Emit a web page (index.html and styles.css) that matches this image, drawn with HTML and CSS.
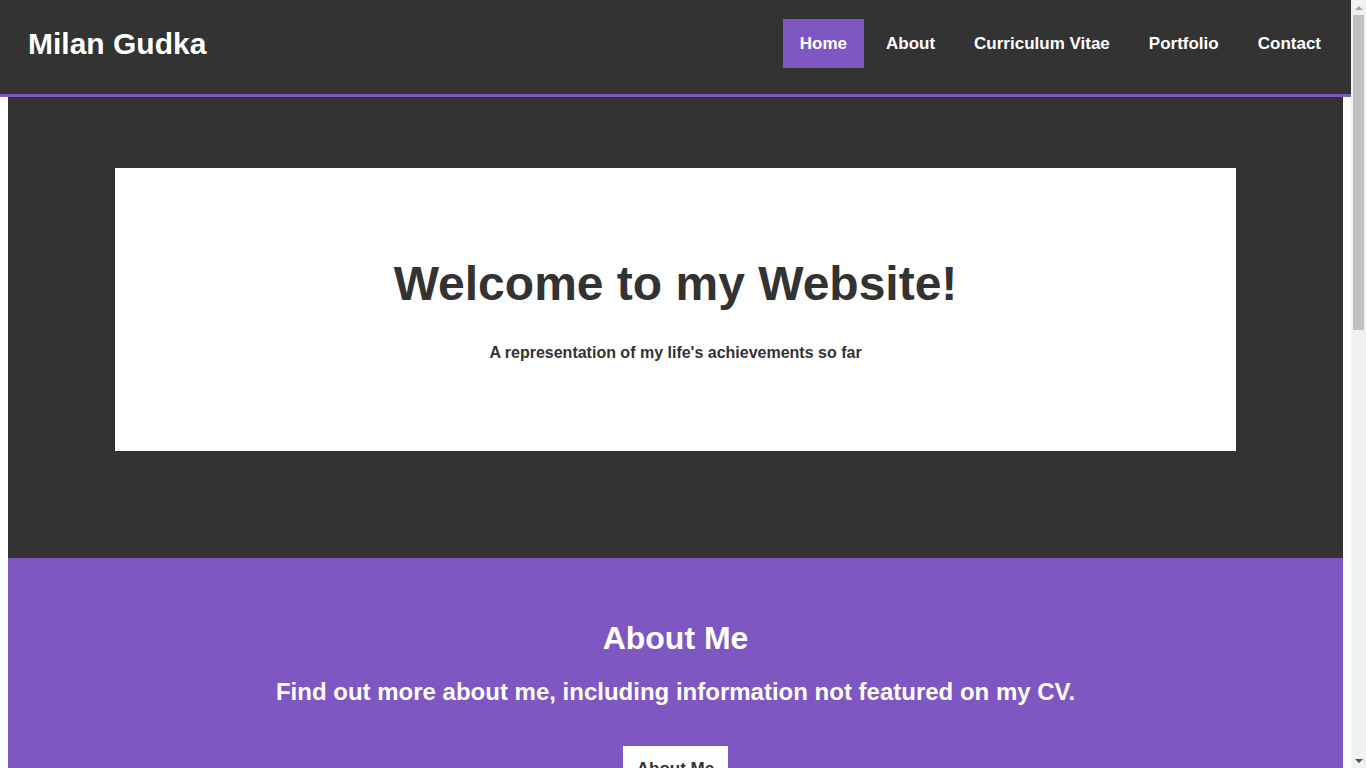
FILE: index.html
```html
<!DOCTYPE html>
<html lang="en">
<head>
<meta charset="utf-8">
<title>Milan Gudka</title>
<link rel="stylesheet" href="styles.css">
</head>
<body>
<header class="site-header">
  <div class="logo">Milan Gudka</div>
  <nav class="nav">
    <ul class="nav-list">
      <li><a class="nav-link active" href="#">Home</a></li>
      <li><a class="nav-link" href="#">About</a></li>
      <li><a class="nav-link" href="#">Curriculum Vitae</a></li>
      <li><a class="nav-link" href="#">Portfolio</a></li>
      <li><a class="nav-link" href="#">Contact</a></li>
    </ul>
  </nav>
</header>

<div class="scrollbar" aria-hidden="true">
  <div class="scroll-arrow up"></div>
  <div class="scroll-track"><div class="scroll-thumb"></div></div>
  <div class="scroll-arrow down"></div>
</div>

<section class="hero">
  <div class="hero-card">
    <h1 class="hero-title">Welcome to my Website!</h1>
    <p class="hero-sub">A representation of my life's achievements so far</p>
  </div>
</section>

<section class="about">
  <h2 class="section-title">About Me</h2>
  <h3 class="section-sub">Find out more about me, including information not featured on my CV.</h3>
  <a class="btn" href="#">About Me</a>
</section>

<section class="portfolio">
  <h2 class="section-title">Portfolio</h2>
  <h3 class="section-sub">Take a look at some of the projects I have worked on.</h3>
  <a class="btn" href="#">Portfolio</a>
</section>

<section class="contact">
  <h2 class="section-title">Contact Me</h2>
  <h3 class="section-sub">Get in touch with me for any enquiries.</h3>
  <a class="btn" href="#">Contact</a>
</section>

<footer class="footer">
  <p>&copy; Milan Gudka</p>
</footer>
</body>
</html>
```

FILE: styles.css
```css
html {
  scrollbar-width: none;
}

body {
  margin: 8px 23px 8px 8px;
  font-family: "Liberation Sans", Arial, sans-serif;
  background: #ffffff;
  color: #333333;
}

.site-header {
  position: fixed;
  top: 0;
  left: 0;
  right: 15px;
  height: 87px;
  padding: 0 13px 7px 28px;
  background: #333333;
  border-bottom: 3px solid #7e57c2;
  display: flex;
  align-items: center;
  justify-content: space-between;
  z-index: 10;
}

.logo {
  color: #ffffff;
  font-size: 30px;
  font-weight: bold;
}

.nav-list {
  list-style: none;
  margin: 0;
  padding: 0;
  display: flex;
  gap: 5px;
}

.nav-link {
  display: block;
  padding: 15px 17px;
  font-size: 17px;
  line-height: 19px;
  font-weight: bold;
  color: #ffffff;
  text-decoration: none;
}

.nav-link.active {
  background: #7e57c2;
}

/* imitation of the classic browser scrollbar shown in the reference */
.scrollbar {
  position: fixed;
  top: 0;
  right: 0;
  width: 15px;
  height: 100vh;
  background: #f1f1f1;
  display: flex;
  flex-direction: column;
  z-index: 20;
}

.scroll-arrow {
  height: 15px;
  display: flex;
  align-items: center;
  justify-content: center;
}

.scroll-arrow.up::before {
  content: "";
  border-left: 4px solid transparent;
  border-right: 4px solid transparent;
  border-bottom: 4px solid #a3a3a3;
}

.scroll-arrow.down::before {
  content: "";
  border-left: 4px solid transparent;
  border-right: 4px solid transparent;
  border-top: 4px solid #505050;
}

.scroll-track {
  flex: 1;
  padding: 0 2px;
}

.scroll-thumb {
  height: 315px;
  background: #c1c1c1;
}

.hero {
  background: #333333;
  padding: 160px 8% 107px;
}

.hero-card {
  background: #ffffff;
  padding: 88px 20px 89px;
  text-align: center;
}

.hero-title {
  margin: 0 0 33px;
  font-size: 48px;
  font-weight: bold;
  color: #333333;
}

.hero-sub {
  margin: 0;
  font-size: 16px;
  font-weight: bold;
  color: #333333;
}

.about,
.portfolio,
.contact {
  text-align: center;
  padding: 62px 20px 62px;
}

.about {
  background: #7e57c2;
  color: #ffffff;
}

.portfolio {
  background: #333333;
  color: #ffffff;
  padding-top: 200px;
  padding-bottom: 210px;
}

.contact {
  background: #7e57c2;
  color: #ffffff;
  padding-top: 110px;
  padding-bottom: 109px;
}

.section-title {
  margin: 0 0 21px;
  font-size: 32px;
  font-weight: bold;
}

.section-sub {
  margin: 0 0 40px;
  font-size: 24px;
  font-weight: bold;
}

.btn {
  display: inline-block;
  padding: 13px 14px;
  font-size: 17px;
  line-height: 19px;
  font-weight: bold;
  background: #ffffff;
  color: #333333;
  text-decoration: none;
}

.footer {
  background: #333333;
  color: #ffffff;
  text-align: center;
  padding: 35px 0;
  font-size: 16px;
}

.footer p {
  margin: 0;
}
```
